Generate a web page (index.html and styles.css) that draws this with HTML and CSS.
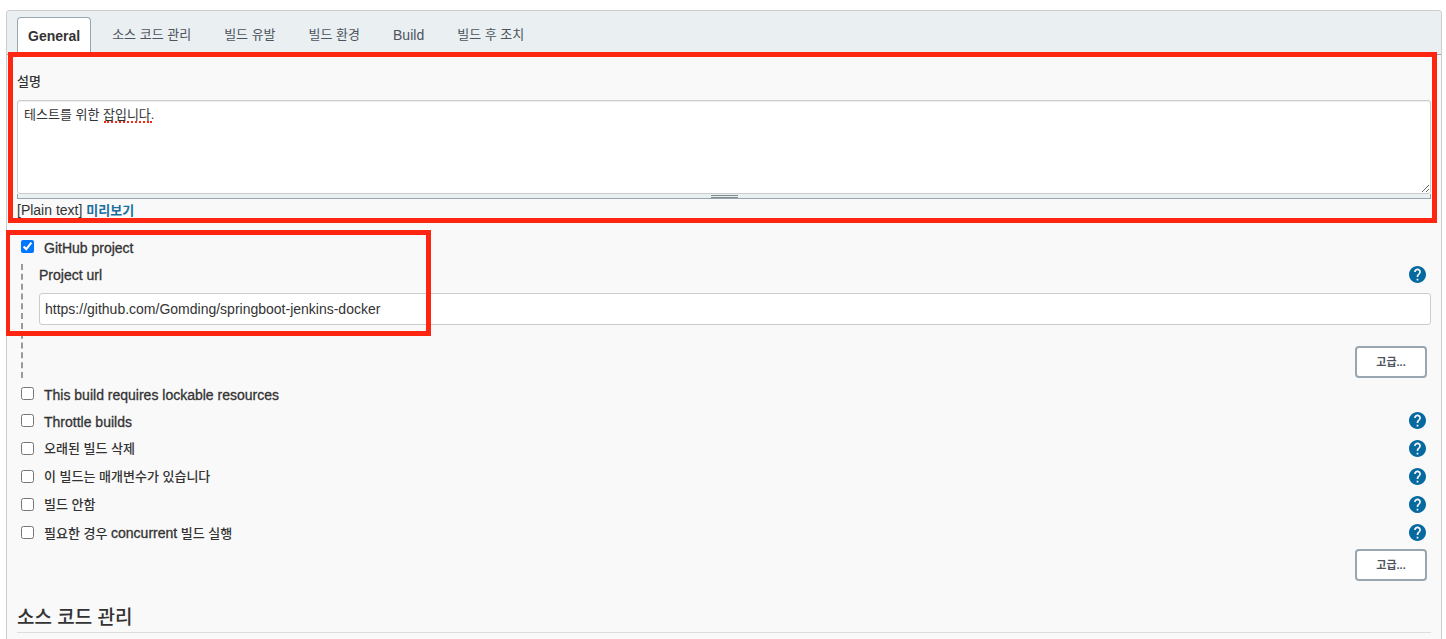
FILE: index.html
```html
<!DOCTYPE html>
<html lang="ko">
<head>
<meta charset="utf-8">
<title>General</title>
<link rel="stylesheet" href="styles.css">
</head>
<body>
<svg class="sprite" aria-hidden="true">
  <symbol id="help" viewBox="2 2 20 20">
    <path d="M12 2C6.48 2 2 6.48 2 12s4.48 10 10 10 10-4.48 10-10S17.52 2 12 2zm1 17h-2v-2h2v2zm2.07-7.75l-.9.92C13.45 12.9 13 13.5 13 15h-2v-.5c0-1.1.45-2.1 1.17-2.83l1.24-1.26c.37-.36.59-.86.59-1.41 0-1.1-.9-2-2-2s-2 .9-2 2H8c0-2.21 1.79-4 4-4s4 1.79 4 4c0 .88-.36 1.68-.93 2.25z"/>
  </symbol>
</svg>
<form class="config">
  <nav class="tabs">
    <a class="tab tab-active" href="#general">General</a>
    <a class="tab ko" href="#scm">소스 코드 관리</a>
    <a class="tab ko" href="#triggers">빌드 유발</a>
    <a class="tab ko" href="#environment">빌드 환경</a>
    <a class="tab" href="#build">Build</a>
    <a class="tab ko" href="#post-build">빌드 후 조치</a>
  </nav>
  <div class="config-body">
    <section class="description" id="general">
      <label class="label ko" for="description">설명</label>
      <div class="editor">
        <textarea class="textarea ko" id="description" spellcheck="false">테스트를 위한 잡입니다.</textarea>
        <span class="spelling"></span>
        <div class="handle"><span class="grip"></span></div>
      </div>
      <div class="format">[Plain text] <a class="preview ko" href="#preview">미리보기</a></div>
      <span class="highlight highlight-description"></span>
    </section>

    <section class="github">
      <div class="option">
        <input class="check" type="checkbox" id="github" checked>
        <label class="label" for="github">GitHub project</label>
      </div>
      <div class="nested">
        <div class="field-head">
          <label class="label" for="url">Project url</label>
          <button class="help" type="button" aria-label="Help"><svg class="help-icon"><use href="#help"/></svg></button>
        </div>
        <input class="text-input" type="text" id="url" value="https://github.com/Gomding/springboot-jenkins-docker">
        <div class="actions"><button class="button" type="button">고급...</button></div>
      </div>
      <span class="highlight highlight-github"></span>
    </section>

    <section class="options">
      <div class="option">
        <input class="check" type="checkbox" id="lockable">
        <label class="label" for="lockable">This build requires lockable resources</label>
      </div>
      <div class="option">
        <input class="check" type="checkbox" id="throttle">
        <label class="label" for="throttle">Throttle builds</label>
        <button class="help" type="button" aria-label="Help"><svg class="help-icon"><use href="#help"/></svg></button>
      </div>
      <div class="option option-ko">
        <input class="check" type="checkbox" id="discard">
        <label class="label ko" for="discard">오래된 빌드 삭제</label>
        <button class="help" type="button" aria-label="Help"><svg class="help-icon"><use href="#help"/></svg></button>
      </div>
      <div class="option option-ko">
        <input class="check" type="checkbox" id="params">
        <label class="label ko" for="params">이 빌드는 매개변수가 있습니다</label>
        <button class="help" type="button" aria-label="Help"><svg class="help-icon"><use href="#help"/></svg></button>
      </div>
      <div class="option option-ko">
        <input class="check" type="checkbox" id="disable">
        <label class="label ko" for="disable">빌드 안함</label>
        <button class="help" type="button" aria-label="Help"><svg class="help-icon"><use href="#help"/></svg></button>
      </div>
      <div class="option option-ko">
        <input class="check" type="checkbox" id="concurrent">
        <label class="label ko" for="concurrent">필요한 경우 <span class="latin">concurrent</span> 빌드 실행</label>
        <button class="help" type="button" aria-label="Help"><svg class="help-icon"><use href="#help"/></svg></button>
      </div>
      <div class="actions actions-tight"><button class="button" type="button">고급...</button></div>
    </section>

    <h2 class="section-title" id="scm">소스 코드 관리</h2>
  </div>
</form>
</body>
</html>
```
FILE: styles.css
```css
* {
  box-sizing: border-box;
}

html {
  overflow: hidden;
}

body {
  margin: 10px 4px 0 6px;
  background: #fff;
  color: #333;
  font-family: "Liberation Sans", "Noto Sans CJK KR", sans-serif;
  font-size: 14px;
  line-height: 20px;
}

.sprite {
  display: none;
}

.ko {
  font-size: 13px;
}

.latin {
  font-size: 14px;
}

.config {
  min-height: calc(100vh - 10px);
  border: 1px solid #ccc;
  border-bottom: 0;
  border-radius: 4px 4px 0 0;
  background: #f9f9f9;
}

.tabs {
  display: flex;
  gap: 1px;
  padding: 6px 10px 0;
  border-bottom: 1px solid #98a6b1;
  border-radius: 3px 3px 0 0;
  background: #eaeff2;
}

.tab {
  padding: 8px 16px 9px;
  color: #4d545d;
  text-decoration: none;
}

.tab-active {
  margin-right: 4px;
  padding: 8px 10px;
  border: 1px solid #98a6b1;
  border-bottom: 0;
  border-radius: 4px 4px 0 0;
  background: #fff;
  color: #333;
  font-weight: 700;
}

.config-body {
  padding: 17px 10px 0;
}

.label {
  font-weight: 500;
  -webkit-text-stroke: 0.3px currentColor;
}

.label.ko {
  -webkit-text-stroke: 0;
}

.label .latin {
  -webkit-text-stroke: 0.3px currentColor;
}

.description,
.github,
.editor {
  position: relative;
}

.description > .label {
  display: block;
  margin-bottom: 8px;
}

.textarea {
  display: block;
  width: 100%;
  height: 94px;
  padding: 4px 6px;
  border: 1px solid #ccc;
  border-radius: 3px;
  background: #fff;
  color: #333;
  font-family: inherit;
  line-height: 20px;
  resize: vertical;
  box-shadow: inset 0 1px 1px #eee;
}

.spelling {
  position: absolute;
  top: 21px;
  left: 87px;
  width: 48px;
  border-bottom: 2px dotted #ff2611;
}

.handle {
  display: flex;
  justify-content: center;
  height: 5px;
  border: 1px solid #98a6b1;
  border-top: 0;
  background: #eaeff2;
}

.grip {
  width: 27px;
  height: 3px;
  margin-top: 1px;
  border-top: 1px solid #7f8c8d;
  border-bottom: 1px solid #7f8c8d;
}

.format {
  padding-top: 1px;
}

.preview {
  color: #1a6f9f;
  font-weight: 700;
  text-decoration: none;
}

.highlight {
  position: absolute;
  border: 5px solid #ff2611;
  pointer-events: none;
}

.highlight-description {
  inset: -20px -6px -2px -9px;
}

.github {
  margin-top: 12px;
}

.highlight-github {
  top: -3px;
  left: -12px;
  width: 426px;
  height: 106px;
}

.option {
  display: flex;
  align-items: center;
  height: 27px;
  padding: 0 5px 0 4px;
}

.option-ko {
  height: 28px;
}

.option .label {
  padding-top: 2px;
}

.check {
  width: 13px;
  height: 13px;
  margin: 0 10px 0 0;
}

.help {
  display: flex;
  margin-left: auto;
  padding: 0;
  border: 0;
  background: none;
}

.help-icon {
  width: 17px;
  height: 17px;
  fill: #066aa0;
}

.nested {
  margin: 4px 0 0 4px;
  padding-left: 16px;
  border-left: 2px dashed #999;
}

.field-head {
  display: flex;
  align-items: center;
  margin-bottom: 8px;
  padding-right: 5px;
}

.field-head .label {
  padding-top: 1px;
}

.text-input {
  display: block;
  width: 100%;
  height: 32px;
  padding: 0 5px;
  border: 1px solid #ccc;
  border-radius: 3px;
  background: #fff;
  color: #333;
  font: inherit;
}

.actions {
  display: flex;
  justify-content: flex-end;
  padding: 21px 4px 0 0;
}

.options {
  margin-top: 2px;
}

.actions-tight {
  padding-top: 3px;
}

.button {
  width: 72px;
  height: 32px;
  padding: 0 0 2px;
  border: 2px solid #98a6b1;
  border-radius: 4px;
  background: #fff;
  color: #4d545d;
  font-family: inherit;
  font-size: 11px;
  font-weight: 700;
}

.section-title {
  margin: 23px 0 0;
  border-bottom: 1px solid #ddd;
  color: #333;
  font-size: 19px;
  font-weight: 500;
  line-height: 28px;
}
```
